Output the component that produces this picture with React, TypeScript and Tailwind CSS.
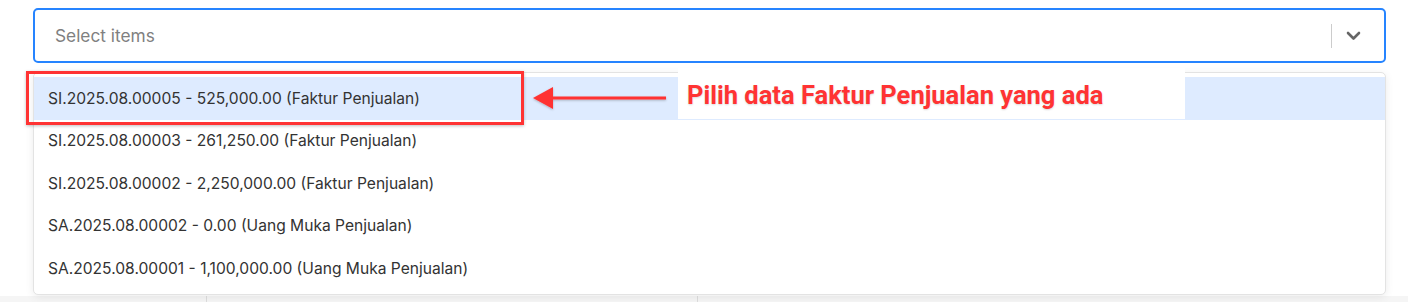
import React from 'react';

const items = [
  'SI.2025.08.00005 - 525,000.00 (Faktur Penjualan)',
  'SI.2025.08.00003 - 261,250.00 (Faktur Penjualan)',
  'SI.2025.08.00002 - 2,250,000.00 (Faktur Penjualan)',
  'SA.2025.08.00002 - 0.00 (Uang Muka Penjualan)',
  'SA.2025.08.00001 - 1,100,000.00 (Uang Muka Penjualan)',
];

export default function App() {
  return (
    <div className="relative h-[302px] w-[1408px] overflow-hidden bg-white font-['Inter',sans-serif]">
      <div className="pl-[33px] pr-[22px] pt-[8px]">
        {/* Select control */}
        <div className="flex h-[55px] items-center rounded-[5px] border-2 border-[#2684ff] bg-white">
          <div className="flex-1 pl-[20px] text-[17.3px] text-[#808080]">Select items</div>
          <div className="h-[24px] w-px bg-[#cccccc]" />
          <div className="flex w-[44px] items-center justify-center pr-[2px] text-[#666666]">
            <svg width="15" height="10" viewBox="0 0 15 10" fill="none">
              <path d="M2 2 L7.5 7.5 L13 2" stroke="currentColor" strokeWidth="2.6" strokeLinecap="round" strokeLinejoin="round" />
            </svg>
          </div>
          <div className="w-[8px]" />
        </div>

        {/* Menu */}
        <div className="relative z-10 mt-[9px] rounded-[5px] border border-[#e3e3e3] bg-white py-[4px] shadow-[0_2px_8px_rgba(0,0,0,0.08)]">
          {items.map((item, i) => (
            <div
              key={item}
              className={`flex h-[42.5px] items-center pl-[14px] text-[15.6px] text-[#333333] ${i === 0 ? 'bg-[#deebff]' : ''}`}
            >
              {item}
            </div>
          ))}
        </div>
      </div>

      {/* Table behind */}
      <div className="mt-[1px] flex h-[10px] bg-[#f5f5f5]">
        <div className="w-[207px] border-r border-[#dddddd]" />
        <div className="w-[491px] border-r border-[#dddddd]" />
      </div>

      {/* Annotation */}
      <div className="absolute left-[678px] top-[68px] z-20 flex h-[51px] w-[507px] items-center bg-white pl-[9px] pt-[3px]">
        <span className="text-[25.5px] font-bold text-[#ff3333] font-['Roboto',sans-serif] [text-shadow:0_1px_2px_rgba(0,0,0,0.15)]">
          Pilih data Faktur Penjualan yang ada
        </span>
      </div>
      <div className="absolute left-[26px] top-[71px] z-20 h-[54px] w-[498px] border-[3px] border-[#ff3333] shadow-[0_1px_3px_rgba(0,0,0,0.25)]" />
      <svg className="absolute left-[530px] top-[84px] z-20" width="140" height="30" viewBox="0 0 140 30">
        <defs>
          <filter id="sh" x="-10%" y="-30%" width="120%" height="160%">
            <feDropShadow dx="0" dy="1" stdDeviation="1" floodColor="#000" floodOpacity="0.25" />
          </filter>
        </defs>
        <g filter="url(#sh)" fill="#ff3333">
          <polygon points="3,14 23,3 23,25" />
          <rect x="20" y="12.5" width="116" height="3" />
        </g>
      </svg>
    </div>
  );
}
